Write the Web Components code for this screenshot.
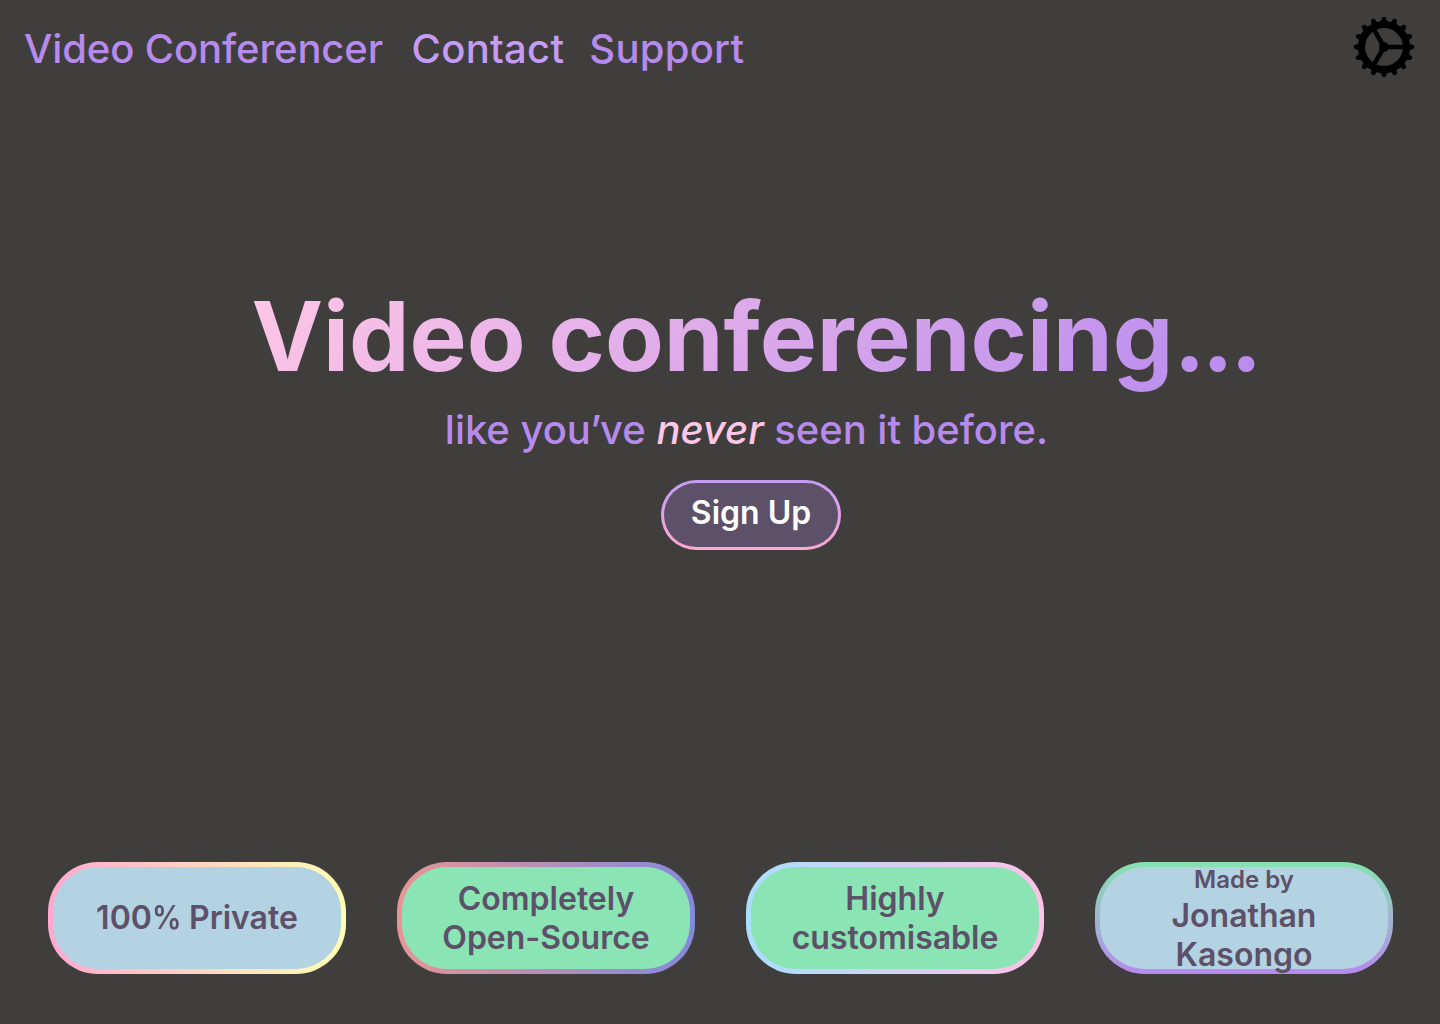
<!DOCTYPE html>
<html lang="en">
<head>
<meta charset="utf-8">
<title>Video Conferencer</title>
<style>
  html, body { margin: 0; height: 100%; background: #403e3c; }
  body { font-family: Inter, "Liberation Sans", sans-serif; overflow: hidden; }
</style>
</head>
<body>
<landing-page></landing-page>
<script>
class Base extends HTMLElement {
  constructor() {
    super();
    this.attachShadow({ mode: "open" }).innerHTML = this.constructor.html;
  }
}

class NavLink extends Base {
  static html = `
    <style>
      :host { display: block; }
      a { color: #b78aee; font-size: 40px; line-height: 48px; font-weight: 500; white-space: nowrap; text-decoration: none; }
      :host([active]) a { color: #c49cf4; }
    </style>
    <a><slot></slot></a>`;
}
customElements.define("nav-link", NavLink);

class SettingsGear extends Base {
  static html = `
    <style>:host { display: block; width: 62px; height: 62px; } svg { display: block; }</style>
    <svg width="62" height="62" viewBox="-31 -31 62 62" fill="none" stroke="#000" role="img">
      <circle r="22.5" stroke-width="7.2"/>
      <g id="teeth" fill="#000" stroke="none"></g>
      <path d="M0 0H20M0 0L-10 -17.32M0 0L-10 17.32" stroke-width="4.5"/>
      <circle r="4.9" fill="#000" stroke="none"/>
    </svg>`;
  connectedCallback() {
    let teeth = "";
    for (let i = 0; i < 16; i++) {
      teeth += `<path transform="rotate(${i * 22.5})" d="M25 -4.2C26 -2.8 26.8 -2.4 28 -2.4C31 -2.3 31 2.3 28 2.4C26.8 2.4 26 2.8 25 4.2Z"/>`;
    }
    this.shadowRoot.getElementById("teeth").innerHTML = teeth;
  }
}
customElements.define("settings-gear", SettingsGear);

class NavBar extends Base {
  static html = `
    <style>
      :host { display: flex; justify-content: space-between; align-items: flex-start; padding: 16px 25px 0 24px; height: 80px; box-sizing: border-box; }
      nav { display: flex; padding-top: 9px; }
      .brand { letter-spacing: -0.11px; }
      .contact { margin-left: 28.5px; letter-spacing: 0.28px; }
      .support { margin-left: 25px; letter-spacing: 0.25px; }
    </style>
    <nav>
      <nav-link class="brand">Video Conferencer</nav-link>
      <nav-link class="contact" active>Contact</nav-link>
      <nav-link class="support">Support</nav-link>
    </nav>
    <settings-gear></settings-gear>`;
}
customElements.define("nav-bar", NavBar);

class PillButton extends Base {
  static html = `
    <style>
      :host { display: block; }
      button { display: flex; align-items: center; justify-content: center; box-sizing: border-box;
        width: 180px; height: 69.5px; padding: 0 0 4px; margin: 0; border: 3px solid transparent; border-radius: 35px;
        background: linear-gradient(#5d5069, #5d5069) padding-box, linear-gradient(#c49cf4, #ffa9d0) border-box;
        color: #fff; font: 600 32px/39px Inter, "Liberation Sans", sans-serif; white-space: nowrap; }
    </style>
    <button><slot></slot></button>`;
}
customElements.define("pill-button", PillButton);

class HeroBanner extends Base {
  static html = `
    <style>
      :host { display: flex; flex-direction: column; align-items: center; padding-top: 198px; }
      h1 { margin: 0 0 0 70px; font-size: 96px; line-height: 116px; font-weight: 700; white-space: nowrap;
        background: linear-gradient(135deg, #ffc7e6, #b78aee); -webkit-background-clip: text; background-clip: text; color: transparent; }
      h1 span { letter-spacing: -3.7px; }
      p { margin: 12px 0 0 53px; font-size: 40px; line-height: 48px; font-weight: 500; color: #b78aee; white-space: nowrap; letter-spacing: -0.04px; }
      p span { letter-spacing: -1.2px; }
      em { color: #ffc7e6; font-style: italic; }
      pill-button { margin: 26px 0 0 62px; }
    </style>
    <h1>Video conferencing<span>...</span></h1>
    <p>like yo<span>u’</span>ve <em>never</em> seen it before.</p>
    <pill-button>Sign Up</pill-button>`;
}
customElements.define("hero-banner", HeroBanner);

class FeatureCard extends Base {
  static html = `
    <style>
      :host { display: flex; flex-direction: column; align-items: center; justify-content: center; box-sizing: border-box;
        width: 298px; height: 112px; border: 5px solid transparent; border-radius: 50px;
        background: linear-gradient(var(--fill), var(--fill)) padding-box, linear-gradient(var(--dir, 90deg), var(--from), var(--to)) border-box;
        color: #5d5069; font-size: 32px; line-height: 39px; font-weight: 600; text-align: center; white-space: nowrap; }
      ::slotted(small) { font-size: 24px; line-height: 29px; display: block; margin-bottom: 2px; margin-top: 2px; }
      ::slotted(span) { display: block; }
    </style>
    <slot></slot>`;
}
customElements.define("feature-card", FeatureCard);

class LandingPage extends Base {
  static html = `
    <style>
      :host { display: flex; flex-direction: column; height: 1024px; }
      footer { display: flex; justify-content: space-between; margin-top: auto; padding: 0 47px 50px 48px; }
      .private { --fill: #b3d2e2; --from: #ffa9d0; --to: #ffffb5; padding-bottom: 2px; }
      .private b { font-weight: inherit; display: inline-block; transform: scaleX(0.92); transform-origin: left; margin-right: -3px; }
      .open { --fill: #8be4b4; --from: #e69595; --to: #8488dc; }
      .custom { --fill: #8be4b4; --from: #a9deff; --to: #ffc2e6; }
      .author { --fill: #b3d2e2; --from: #86e3b0; --to: #b78aee; --dir: 180deg; }
    </style>
    <nav-bar></nav-bar>
    <hero-banner></hero-banner>
    <footer>
      <feature-card class="private"><span>100<b>%</b> Private</span></feature-card>
      <feature-card class="open"><span>Completely</span><span>Open-Source</span></feature-card>
      <feature-card class="custom"><span>Highly</span><span>customisable</span></feature-card>
      <feature-card class="author"><small>Made by</small><span>Jonathan</span><span>Kasongo</span></feature-card>
    </footer>`;
}
customElements.define("landing-page", LandingPage);
</script>
</body>
</html>
